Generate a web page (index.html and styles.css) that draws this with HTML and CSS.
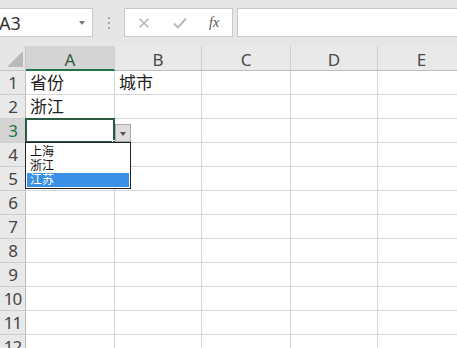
FILE: index.html
```html
<!DOCTYPE html>
<html lang="zh-CN">
<head>
  <meta charset="UTF-8" />
  <title>Data validation list</title>
  <link rel="stylesheet" href="styles.css">
</head>
<body>

  <div class="toolbar">
    <div class="name-box">
      <span class="name-text">A3</span>
      <span class="name-arrow"></span>
    </div>
    <div class="grip"><i></i><i></i><i></i></div>
    <div class="fx-buttons">
      <svg class="fx-icon" width="14" height="14" viewBox="0 0 14 14">
        <path d="M2.5 2.5 L11.5 11.5 M11.5 2.5 L2.5 11.5" stroke="#b8b8b8" stroke-width="1.6" fill="none"/>
      </svg>
      <svg class="fx-icon" width="16" height="14" viewBox="0 0 16 14">
        <path d="M2 7.5 L6 11.5 L14 2.5" stroke="#b8b8b8" stroke-width="2" fill="none"/>
      </svg>
      <span class="fx-label">fx</span>
    </div>
    <div class="formula-input"></div>
  </div>

  <div class="sheet">
    <div class="corner"><span class="corner-tri"></span></div>
    <div class="col-head active">A</div>
    <div class="col-head">B</div>
    <div class="col-head">C</div>
    <div class="col-head">D</div>
    <div class="col-head">E</div>

    <div class="row-head">1</div>
    <div class="cell">省份</div><div class="cell">城市</div><div class="cell"></div><div class="cell"></div><div class="cell"></div>

    <div class="row-head">2</div>
    <div class="cell">浙江</div><div class="cell"></div><div class="cell"></div><div class="cell"></div><div class="cell"></div>

    <div class="row-head active">3</div>
    <div class="cell current">
      <span class="selection"></span>
      <span class="fill-handle"></span>
      <span class="drop-btn"></span>
      <ul class="drop-list">
        <li>上海</li>
        <li>浙江</li>
        <li class="picked">江苏</li>
      </ul>
    </div><div class="cell"></div><div class="cell"></div><div class="cell"></div><div class="cell"></div>

    <div class="row-head">4</div>
    <div class="cell"></div><div class="cell"></div><div class="cell"></div><div class="cell"></div><div class="cell"></div>
    <div class="row-head">5</div>
    <div class="cell"></div><div class="cell"></div><div class="cell"></div><div class="cell"></div><div class="cell"></div>
    <div class="row-head">6</div>
    <div class="cell"></div><div class="cell"></div><div class="cell"></div><div class="cell"></div><div class="cell"></div>
    <div class="row-head">7</div>
    <div class="cell"></div><div class="cell"></div><div class="cell"></div><div class="cell"></div><div class="cell"></div>
    <div class="row-head">8</div>
    <div class="cell"></div><div class="cell"></div><div class="cell"></div><div class="cell"></div><div class="cell"></div>
    <div class="row-head">9</div>
    <div class="cell"></div><div class="cell"></div><div class="cell"></div><div class="cell"></div><div class="cell"></div>
    <div class="row-head">10</div>
    <div class="cell"></div><div class="cell"></div><div class="cell"></div><div class="cell"></div><div class="cell"></div>
    <div class="row-head">11</div>
    <div class="cell"></div><div class="cell"></div><div class="cell"></div><div class="cell"></div><div class="cell"></div>
    <div class="row-head">12</div>
    <div class="cell"></div><div class="cell"></div><div class="cell"></div><div class="cell"></div><div class="cell"></div>
  </div>

</body>
</html>
```

FILE: styles.css
```css
* {
  box-sizing: border-box;
}

body {
  margin: 0;
  padding: 0;
  width: 457px;
  height: 348px;
  overflow: hidden;
  background: #fff;
  font-family: 'Noto Sans', 'Noto Sans CJK SC', sans-serif;
  color: #333;
}

/* formula bar */
.toolbar {
  display: flex;
  align-items: flex-start;
  height: 46px;
  padding-top: 8px;
  background: #e6e6e6;
}

.name-box {
  position: relative;
  width: 93px;
  height: 29px;
  background: #fff;
  border: 1px solid #c8c8c8;
  border-left: none;
  display: flex;
  align-items: center;
}

.name-text {
  font-size: 18px;
  margin-left: -1px;
  color: #333;
}

.name-arrow {
  position: absolute;
  right: 7px;
  top: 12px;
  border-left: 3px solid transparent;
  border-right: 3px solid transparent;
  border-top: 4px solid #777;
}

.grip {
  width: 31px;
  height: 29px;
  display: flex;
  flex-direction: column;
  align-items: center;
  justify-content: center;
  gap: 3px;
}

.grip i {
  display: block;
  width: 2px;
  height: 2px;
  background: #a8a8a8;
}

.fx-buttons {
  width: 109px;
  height: 29px;
  background: #fff;
  border: 1px solid #c8c8c8;
  display: flex;
  align-items: center;
  padding-left: 12px;
  gap: 21px;
}

.fx-label {
  font-family: 'Liberation Serif', serif;
  font-style: italic;
  font-size: 14px;
  color: #555;
}

.formula-input {
  flex: 1;
  height: 29px;
  margin-left: 4px;
  background: #fff;
  border: 1px solid #c8c8c8;
  border-right: none;
}

/* grid */
.sheet {
  display: grid;
  grid-template-columns: 26px 89px 87px 89px 87px 88px;
  grid-template-rows: 25px repeat(12, 24px);
}

.corner {
  position: relative;
  background: #e6e6e6;
  border-right: 1px solid #c4c4c4;
  border-bottom: 1px solid #c4c4c4;
}

.corner-tri {
  position: absolute;
  right: 2px;
  bottom: 3px;
  border-left: 16px solid transparent;
  border-bottom: 16px solid #b9b9b9;
}

.col-head {
  background: #e9e9e9;
  border-right: 1px solid #cfcfcf;
  border-bottom: 1px solid #bdbdbd;
  font-size: 17px;
  line-height: 21px;
  padding-top: 3px;
  text-align: center;
  color: #4a4a4a;
}

.col-head.active {
  background: #d4d4d4;
  border-bottom: 2px solid #217346;
  color: #2c5a3f;
}

.row-head {
  background: #e9e9e9;
  border-right: 1px solid #bdbdbd;
  border-bottom: 1px solid #cfcfcf;
  font-size: 17px;
  line-height: 23px;
  text-align: center;
  letter-spacing: -1px;
  color: #444;
}

.row-head.active {
  background: #d4d4d4;
  color: #217346;
}

.cell {
  border-right: 1px solid #d6d6d6;
  border-bottom: 1px solid #d6d6d6;
  font-size: 17px;
  line-height: 23px;
  padding-left: 4px;
  color: #222;
  white-space: nowrap;
}

.cell.current {
  position: relative;
}

.selection {
  position: absolute;
  left: -1px;
  top: -1px;
  right: -1px;
  bottom: -1px;
  border: 2px solid #2b5c3f;
}

.fill-handle {
  position: absolute;
  right: -4px;
  bottom: -4px;
  width: 6px;
  height: 6px;
  background: #2b5c3f;
  border: 1px solid #fff;
}

.drop-btn {
  position: absolute;
  left: 89px;
  top: 5px;
  width: 16px;
  height: 18px;
  background: #dedede;
  border: 1px solid #a8a8a8;
}

.drop-btn::after {
  content: '';
  position: absolute;
  left: 4px;
  top: 7px;
  border-left: 3px solid transparent;
  border-right: 3px solid transparent;
  border-top: 4px solid #555;
}

.drop-list {
  position: absolute;
  left: -1px;
  top: 23px;
  width: 106px;
  height: 47px;
  margin: 0;
  padding: 2px 1px 1px;
  list-style: none;
  background: #fff;
  border: 1px solid #222;
  z-index: 2;
}

.drop-list li {
  height: 14px;
  font-size: 12px;
  line-height: 14px;
  padding-left: 3px;
  color: #111;
}

.drop-list li.picked {
  background: #3b8fe4;
  color: #fff;
}
```
